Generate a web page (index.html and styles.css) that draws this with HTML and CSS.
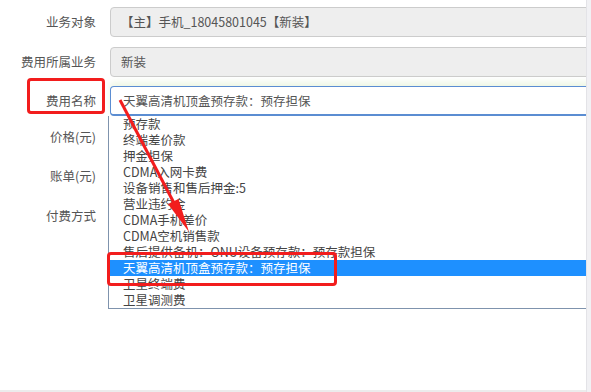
FILE: index.html
```html
<!DOCTYPE html>
<html lang="zh-CN">
<head>
  <meta charset="UTF-8">
  <title>费用录入</title>
  <link rel="stylesheet" href="styles.css">
</head>
<body>
<div class="page">
  <form class="fee-form">
    <div class="row">
      <label>业务对象</label>
      <div class="field readonly">【主】手机_18045801045【新装】</div>
    </div>
    <div class="row">
      <label>费用所属业务</label>
      <div class="field readonly">新装</div>
    </div>
    <div class="row">
      <label>费用名称</label>
      <div class="select-wrap">
        <div class="field focus">天翼高清机顶盒预存款：预存担保</div>
        <ul class="options">
          <li>预存款</li>
          <li>终端差价款</li>
          <li>押金担保</li>
          <li>CDMA入网卡费</li>
          <li>设备销售和售后押金:5</li>
          <li>营业违约金</li>
          <li>CDMA手机差价</li>
          <li>CDMA空机销售款</li>
          <li>售后提供备机：ONU设备预存款：预存款担保</li>
          <li class="sel">天翼高清机顶盒预存款：预存担保</li>
          <li>卫星终端费</li>
          <li>卫星调测费</li>
        </ul>
      </div>
    </div>
    <div class="row low">
      <label>价格(元)</label>
      <div class="field"></div>
    </div>
    <div class="row low">
      <label>账单(元)</label>
      <div class="field"></div>
    </div>
    <div class="row low">
      <label>付费方式</label>
      <div class="field"></div>
    </div>
  </form>

  <!-- annotations -->
  <div class="mark mark-label"></div>
  <div class="mark mark-item"></div>
  <svg class="arrow" width="591" height="392" viewBox="0 0 591 392">
    <line x1="120" y1="100" x2="174" y2="203" stroke="#f21d1d" stroke-width="3"/>
    <polygon points="189,232 168,204 178.5,199" fill="#f21d1d"/>
  </svg>
</div>
<div class="scrollbar"></div>
</body>
</html>
```

FILE: styles.css
```css
html, body { margin: 0; height: 100%; }
body {
  display: flex;
  background: #fff;
  font-family: "Noto Sans CJK SC", "Liberation Sans", sans-serif;
  font-size: 12.5px;
  overflow: hidden;
}
.page {
  position: relative;
  flex: 1;
  height: 390px;
  overflow: hidden;
  border-bottom: 2px solid #ececec;
}
.scrollbar {
  width: 4px;
  height: 392px;
  background: #f1f1f4;
  border-left: 1px solid #e3e3e7;
}
.fee-form { padding-top: 7px; }
.row {
  display: grid;
  grid-template-columns: 96px 500px;
  column-gap: 14px;
  margin-bottom: 9.5px;
}
.row label {
  text-align: right;
  color: #555;
  line-height: 30px;
  white-space: nowrap;
}
.row.low label { line-height: 16px; padding-top: 3px; }
.field {
  height: 30px;
  box-sizing: border-box;
  border: 1px solid #ccc;
  border-radius: 4px;
  padding: 0 10px;
  line-height: 28px;
  color: #555;
  background: #fff;
  white-space: nowrap;
}
.field.readonly { background: #eee; }
.field.focus {
  border-color: #5b8dd2;
  border-width: 1px 1px 2px;
  padding-left: 12px;
  box-shadow: 0 -4px 6px rgba(214, 236, 196, .45);
}
.select-wrap { position: relative; }
.options {
  position: absolute;
  top: 30px;
  left: -2px;
  right: 0;
  margin: 0;
  padding: 0;
  list-style: none;
  background: #fff;
  border: 1px solid #7f93ad;
  border-top: 0;
  z-index: 2;
}
.options li {
  height: 16px;
  line-height: 16px;
  padding-left: 14px;
  color: #444;
  white-space: nowrap;
}
.options li.sel { background: #1e90ff; color: #fff; }
.mark {
  position: absolute;
  box-sizing: border-box;
  border: 3px solid #f21d1d;
  border-radius: 4px;
  z-index: 3;
}
.mark-label { left: 27px; top: 78px; width: 78px; height: 36px; }
.mark-item { left: 107px; top: 252px; width: 230px; height: 34px; }
.arrow {
  position: absolute;
  left: 0;
  top: 0;
  z-index: 4;
  pointer-events: none;
}
```
